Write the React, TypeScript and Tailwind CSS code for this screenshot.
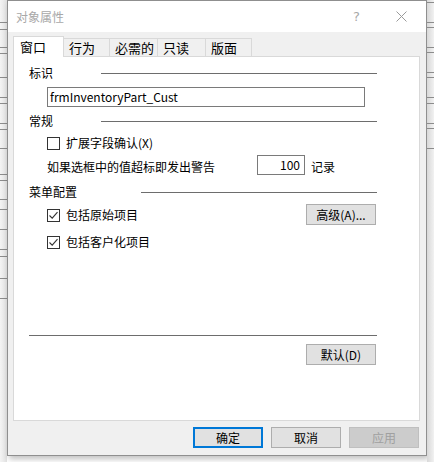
import React from "react";

function CheckBox({ checked }: { checked?: boolean }) {
  return (
    <div className="w-[13px] h-[13px] border border-[#333333] bg-white flex items-center justify-center shrink-0">
      {checked && (
        <svg width="11" height="11" viewBox="0 0 11 11">
          <path d="M1.5 5.5 L4.2 8.2 L9.5 2.2" fill="none" stroke="#333333" strokeWidth="1.1" />
        </svg>
      )}
    </div>
  );
}

function Heading({ label, labelWidth }: { label: string; labelWidth: string }) {
  return (
    <div className="h-[16px] flex items-center pl-[15px]">
      <span className={`${labelWidth} leading-[16px]`}>{label}</span>
      <div className="flex-1 h-px bg-[#6d6d6d] mr-[42px]" />
    </div>
  );
}

function Btn({ children, kind }: { children: React.ReactNode; kind?: "default" | "disabled" }) {
  const cls =
    kind === "default"
      ? "border-2 border-[#0078d7] bg-[#e1e1e1] text-black"
      : kind === "disabled"
      ? "border border-[#bfbfbf] bg-[#cccccc] text-[#a0a0a0]"
      : "border border-[#adadad] bg-[#e1e1e1] text-black";
  return <div className={`w-[70px] h-[21px] flex items-center justify-center leading-none ${cls}`}>{children}</div>;
}

const tabs = [
  { t: "行为", w: "w-[46px]" },
  { t: "必需的", w: "w-[48px]" },
  { t: "只读", w: "w-[48px]" },
  { t: "版面", w: "w-[46px]" },
];

export default function App() {
  return (
    <div className="w-[434px] h-[462px] bg-white flex overflow-hidden text-[12px] text-black font-['Noto_Sans_CJK_SC','Noto_Sans',sans-serif]">
      {/* background window, left */}
      <div className="w-[7px] h-full bg-gradient-to-r from-[#f4f4f4] to-[#e2e2e2] flex flex-col">
        <div className="h-px bg-[#8c8c8c] mt-[22px]" />
        <div className="h-px bg-[#8c8c8c] mt-[6px]" />
        <div className="h-px bg-[#8c8c8c] mt-[17px]" />
        <div className="h-px bg-[#8c8c8c] mt-[5px]" />
        <div className="h-px bg-[#8c8c8c] mt-[23px]" />
        <div className="h-px bg-[#8c8c8c] mt-[19px]" />
        <div className="h-px bg-[#8c8c8c] mt-[5px]" />
        <div className="h-px bg-[#8c8c8c] mt-[19px]" />
        <div className="h-px bg-[#8c8c8c] mt-[5px]" />
        <div className="h-px bg-[#8c8c8c] mt-[18px]" />
        <div className="h-px bg-[#8c8c8c] mt-[25px]" />
        <div className="h-px bg-[#8c8c8c] mt-[5px]" />
        <div className="h-px bg-[#8c8c8c] mt-[18px]" />
        <div className="h-px bg-[#8c8c8c] mt-[9px]" />
        <div className="h-px bg-[#8c8c8c] mt-[19px]" />
        <div className="h-px bg-[#8c8c8c] mt-[19px]" />
        <div className="h-px bg-[#8c8c8c] mt-[6px]" />
        <div className="h-px bg-[#8c8c8c] mt-[21px]" />
        <div className="h-px bg-[#8c8c8c] mt-[19px]" />
      </div>

      {/* dialog */}
      <div className="w-[420px] h-[456px] border border-[#8f8f8f] flex flex-col shadow-[2px_3px_6px_rgba(0,0,0,0.25)] shrink-0">
        <div className="h-[31px] bg-white flex items-center pl-[8px]">
          <span className="text-[#a8a8a8] leading-none">对象属性</span>
          <span className="ml-[289px] text-[#a8a8a8] text-[13px] leading-none font-['DejaVu_Sans',sans-serif]">?</span>
          <svg className="ml-[36px]" width="11" height="11" viewBox="0 0 11 11">
            <path d="M0.5 0.5 L10.5 10.5 M10.5 0.5 L0.5 10.5" stroke="#9a9a9a" strokeWidth="1" />
          </svg>
        </div>

        <div className="flex-1 bg-[#f0f0f0] flex flex-col pt-[4px] pl-[5px] pr-[6px]">
          {/* tabs */}
          <div className="h-[20px] flex items-start">
            <div className="relative z-10 w-[51px] h-[21px] bg-white border-l border-t border-r border-[#d9d9d9] pl-[6px] pt-[3px] leading-[14px] text-[13px]">
              窗口
            </div>
            {tabs.map((t) => (
              <div
                key={t.t}
                className={`${t.w} h-[18px] mt-[2px] border-t border-r border-[#d9d9d9] bg-[#f0f0f0] pl-[5px] pt-[2px] leading-[14px] text-[13px]`}
              >
                {t.t}
              </div>
            ))}
          </div>

          {/* panel */}
          <div className="h-[365px] bg-white border border-[#d9d9d9] flex flex-col">
            <div className="mt-[8px]">
              <Heading label="标识" labelWidth="w-[72px]" />
            </div>
            <div className="mt-[6px] ml-[33px] w-[318px] h-[20px] border border-[#7a7a7a] flex items-center pl-[2px] leading-none">
              frmInventoryPart_Cust
            </div>
            <div className="mt-[6px]">
              <Heading label="常规" labelWidth="w-[72px]" />
            </div>
            <div className="mt-[6px] ml-[33px] h-[16px] flex items-center gap-[6px]">
              <CheckBox />
              <span className="leading-none">扩展字段确认(X)</span>
            </div>
            <div className="mt-[4px] ml-[33px] h-[20px] flex items-center">
              <span className="w-[210px] leading-none pt-[3px]">如果选框中的值超标即发出警告</span>
              <div className="w-[48px] h-[20px] border border-[#7a7a7a] flex items-center justify-end pr-[4px] leading-none">
                100
              </div>
              <span className="ml-[6px] leading-none pt-[3px]">记录</span>
            </div>
            <div className="mt-[9px]">
              <Heading label="菜单配置" labelWidth="w-[112px]" />
            </div>
            <div className="mt-[4px] ml-[33px] mr-[43px] h-[21px] flex items-center justify-between">
              <div className="flex items-center gap-[6px] pt-[1px]">
                <CheckBox checked />
                <span className="leading-none">包括原始项目</span>
              </div>
              <Btn>高级(A)...</Btn>
            </div>
            <div className="mt-[9px] ml-[33px] h-[16px] flex items-center gap-[6px]">
              <CheckBox checked />
              <span className="leading-none">包括客户化项目</span>
            </div>
            <div className="mt-[85px] ml-[15px] mr-[42px] h-px bg-[#6d6d6d]" />
            <div className="mt-[8px] mr-[43px] flex justify-end">
              <Btn>默认(D)</Btn>
            </div>
          </div>

          {/* dialog buttons */}
          <div className="mt-[6px] flex justify-end gap-[8px] pr-[1px]">
            <Btn kind="default">确定</Btn>
            <Btn>取消</Btn>
            <Btn kind="disabled">应用</Btn>
          </div>
        </div>
      </div>

      {/* background window, right */}
      <div className="flex-1 h-full bg-gradient-to-r from-[#d8d8d8] to-[#f2f2f2] flex flex-col">
        <div className="h-px bg-[#8c8c8c] mt-[2px]" />
        <div className="h-px bg-[#8c8c8c] mt-[19px]" />
        <div className="h-px bg-[#8c8c8c] mt-[4px]" />
        <div className="h-px bg-[#8c8c8c] mt-[19px]" />
        <div className="h-px bg-[#8c8c8c] mt-[4px]" />
        <div className="h-px bg-[#8c8c8c] mt-[19px]" />
        <div className="h-px bg-[#8c8c8c] mt-[4px]" />
        <div className="h-px bg-[#8c8c8c] mt-[19px]" />
        <div className="h-px bg-[#8c8c8c] mt-[5px]" />
        <div className="h-px bg-[#8c8c8c] mt-[19px]" />
        <div className="h-px bg-[#8c8c8c] mt-[4px]" />
        <div className="h-px bg-[#8c8c8c] mt-[19px]" />
      </div>
    </div>
  );
}
